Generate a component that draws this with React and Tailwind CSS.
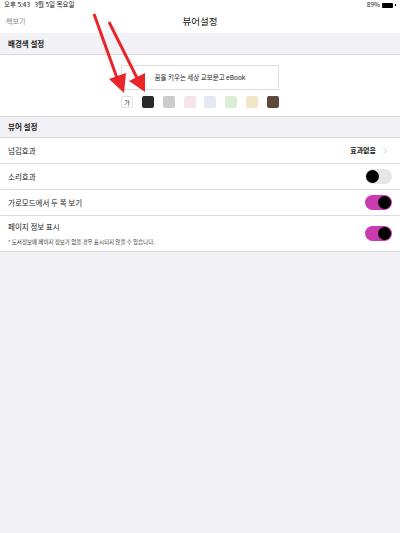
import React from 'react'

const swatches = ['#2a2a2a', '#cccccc', '#f5e5ea', '#e5e7f5', '#ddebd7', '#f0e7ca', '#5b4a3a']

function Toggle({ on }) {
  return (
    <div
      className={`w-[27px] h-[15px] rounded-full flex items-center px-[1px] ${
        on ? 'bg-[#c83cb0] justify-end' : 'bg-[#e6e6e6] justify-start'
      }`}
    >
      <div className="w-[13px] h-[13px] rounded-full bg-black" />
    </div>
  )
}

function Row({ label, children, sub }) {
  return (
    <div className={`flex items-center justify-between pl-[8px] pr-[8px] border-b border-[#dcdcdc] bg-white ${sub ? 'h-[36px]' : 'h-[26px]'}`}>
      <div className="flex flex-col">
        <span className="text-[7.5px] text-[#222]">{label}</span>
        {sub && <span className="text-[5.5px] text-[#333] mt-[5px]">{sub}</span>}
      </div>
      {children}
    </div>
  )
}

export default function App() {
  return (
    <div
      className="relative w-[400px] h-[533px] bg-[#f2f1f6] overflow-hidden"
      style={{ fontFamily: '"Noto Sans CJK KR", "Noto Sans", sans-serif' }}
    >
      {/* status bar */}
      <div className="h-[10px] bg-white flex items-center justify-between px-[4px] text-[6.5px] text-[#111]">
        <span>오후 5:43&nbsp;&nbsp;&nbsp;3월 5일 목요일</span>
        <span className="flex items-center gap-[2px]">
          89%
          <span className="w-[11px] h-[5px] bg-black rounded-[1px]" />
          <span className="w-[1px] h-[2px] bg-black" />
        </span>
      </div>

      {/* nav bar */}
      <div className="relative h-[23px] bg-white flex items-center justify-center">
        <span className="absolute left-[6px] text-[7px] text-[#888]">책보기</span>
        <span className="text-[9.5px] text-[#111]">뷰어설정</span>
      </div>

      {/* 배경색 설정 */}
      <div className="h-[22px] flex items-center pl-[8px] border-b border-[#d8d8d8]">
        <span className="text-[7.5px] font-bold text-[#222]">배경색 설정</span>
      </div>
      <div className="bg-white flex flex-col items-center pt-[10px] pb-[8px]">
        <div className="w-[158px] h-[25px] border border-[#dcdcdc] flex items-center justify-center text-[6.5px] text-[#222]">
          꿈을 키우는 세상 교보문고 eBook
        </div>
        <div className="w-[158px] mt-[6px] flex justify-between">
          <div className="w-[12px] h-[12px] border border-[#e4e4e4] rounded-[2px] flex items-center justify-center text-[6px] text-[#222]">
            가
          </div>
          {swatches.map(c => (
            <div key={c} className="w-[12px] h-[12px] rounded-[2px]" style={{ backgroundColor: c }} />
          ))}
        </div>
      </div>

      {/* 뷰어 설정 */}
      <div className="h-[22px] flex items-center pl-[8px] border-y border-[#d8d8d8]">
        <span className="text-[7.5px] font-bold text-[#222]">뷰어 설정</span>
      </div>
      <Row label="넘김효과">
        <span className="flex items-center gap-[7px] mr-[5px]">
          <span className="text-[7px] font-bold text-[#222]">효과없음</span>
          <svg width="4" height="7" viewBox="0 0 4 7">
            <path d="M0.5 0.5 L3.5 3.5 L0.5 6.5" fill="none" stroke="#c4c4c4" strokeWidth="0.8" />
          </svg>
        </span>
      </Row>
      <Row label="소리효과">
        <Toggle on={false} />
      </Row>
      <Row label="가로모드에서 두 쪽 보기">
        <Toggle on />
      </Row>
      <Row label="페이지 정보 표시" sub="* 도서정보에 페이지 정보가 없을 경우 표시되지 않을 수 있습니다.">
        <Toggle on />
      </Row>

      {/* annotation arrows */}
      <svg className="absolute inset-0 pointer-events-none" width="400" height="533">
        <line x1="94" y1="14" x2="117" y2="78" stroke="#e8262a" strokeWidth="3" />
        <polygon points="124,93 109,79 126,73" fill="#e8262a" />
        <line x1="109" y1="22" x2="137" y2="78" stroke="#e8262a" strokeWidth="3" />
        <polygon points="145,92 129,81 145,73" fill="#e8262a" />
      </svg>
    </div>
  )
}
